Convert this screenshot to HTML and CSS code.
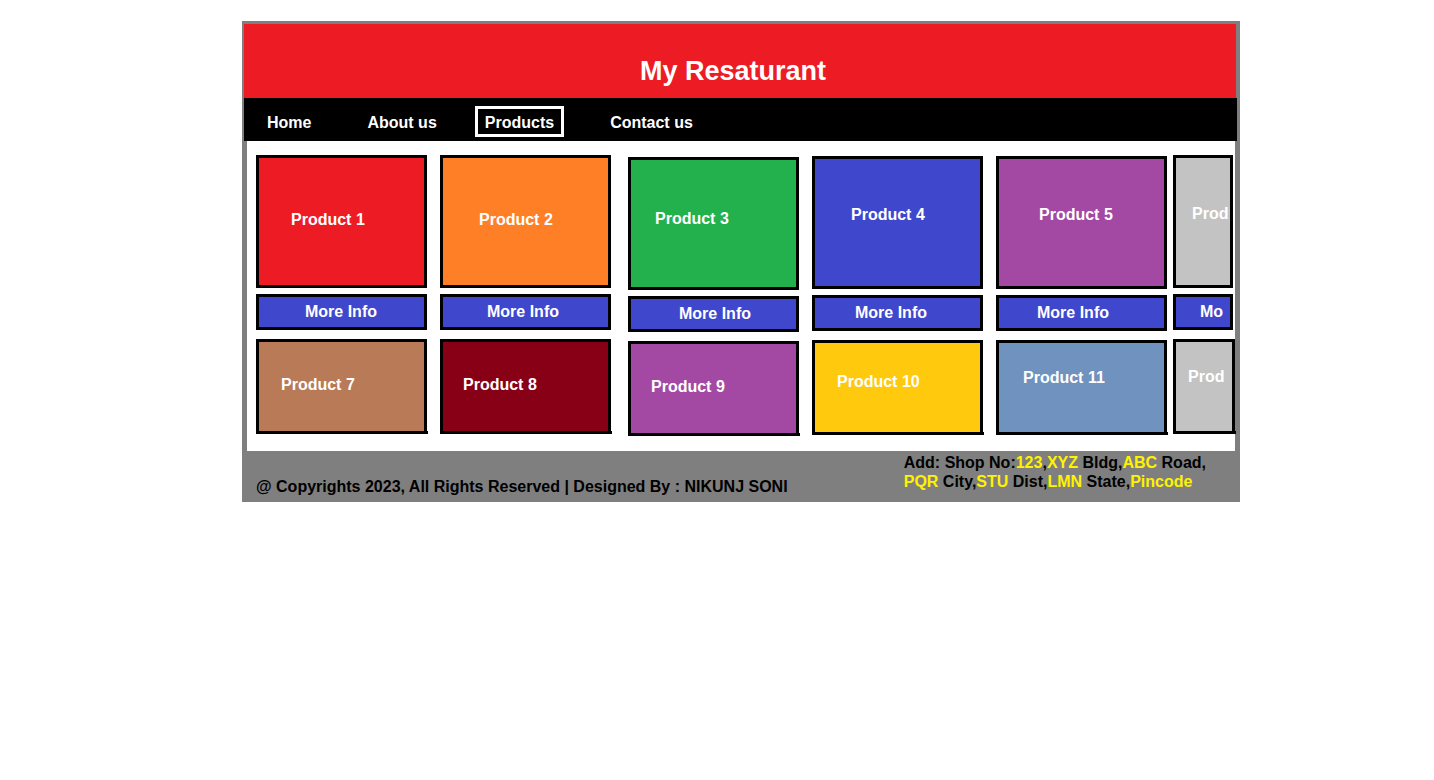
FILE: index.html
```html
<!DOCTYPE html>
<html lang="en">
<head>
<meta charset="utf-8">
<title>My Resaturant</title>
<link rel="stylesheet" href="styles.css">
</head>
<body>
<div class="page">
  <header class="banner"><h1 class="title">My Resaturant</h1></header>
  <nav class="nav">
    <a class="nav-link" href="#">Home</a>
    <a class="nav-link spaced" href="#">About us</a>
    <a class="nav-link current" href="#">Products</a>
    <a class="nav-link spaced" href="#">Contact us</a>
  </nav>
  <main class="products">
    <section class="column gap-m">
      <div class="card tall red in-32">Product 1</div>
      <button class="more in-46">More Info</button>
      <div class="card short brown in-22">Product 7</div>
    </section>
    <section class="column gap-l">
      <div class="card tall orange in-36">Product 2</div>
      <button class="more in-44">More Info</button>
      <div class="card short maroon in-20">Product 8</div>
    </section>
    <section class="column gap-m drop-2">
      <div class="card tall mid green in-24">Product 3</div>
      <button class="more in-48">More Info</button>
      <div class="card short purple in-20">Product 9</div>
    </section>
    <section class="column gap-m drop-1">
      <div class="card tall raised blue in-36">Product 4</div>
      <button class="more in-40">More Info</button>
      <div class="card short mid yellow in-22">Product 10</div>
    </section>
    <section class="column gap-s drop-1">
      <div class="card tall raised purple in-40">Product 5</div>
      <button class="more in-38">More Info</button>
      <div class="card short raised steel in-24">Product 11</div>
    </section>
    <section class="column narrow">
      <div class="card tall raised silver in-16">Prod</div>
      <button class="more in-24">Mo</button>
      <div class="card short raised silver in-12 bleed">Prod</div>
    </section>
  </main>
  <footer class="footer">
    <p class="copyright">@ Copyrights 2023, All Rights Reserved | Designed By : NIKUNJ SONI</p>
    <address class="address">Add: Shop No:<span class="mark">123</span>,<span class="mark">XYZ</span> Bldg,<span class="mark">ABC</span> Road,<br><span class="mark">PQR</span> City,<span class="mark">STU</span> Dist,<span class="mark">LMN</span> State,<span class="mark">Pincode</span></address>
  </footer>
</div>
</body>
</html>
```
FILE: styles.css
```css
* { box-sizing: border-box; }

body {
  margin: 0;
  padding: 21px 194px 0 242px;
  background: #fff;
  font: bold 16px/18px "Liberation Sans", Arial, sans-serif;
}

.page {
  background: #7f7f7f;
  padding: 3px 3px 0 2px;
}

.banner {
  margin-right: 1px;
  background: #ed1c24;
  padding: 31px 14px 11px 0;
  color: #fff;
  text-align: center;
}

.title {
  margin: 0;
  font-size: 27px;
  line-height: 32px;
}

.nav {
  display: flex;
  gap: 28px;
  background: #000;
  padding: 8px 13px 4px;
}

.nav-link {
  border: 3px solid transparent;
  padding: 5px 7px 2px;
  line-height: 18px;
  color: #fff;
  text-decoration: none;
}

.spaced { margin-left: 8px; }
.current { border-color: #fff; }

.products {
  display: flex;
  align-items: flex-start;
  margin: 0 2px 0 3px;
  padding: 14px 2px 15px 9px;
  background: #fff;
}

.column {
  display: flex;
  flex: 171 1 0;
  flex-direction: column;
  min-width: 0;
}

.narrow { flex-grow: 60; }
.gap-s { margin-right: 6px; }
.gap-m { margin-right: 13px; }
.gap-l { margin-right: 17px; }
.drop-1 { padding-top: 1px; }
.drop-2 { padding-top: 2px; }

.card {
  position: relative;
  border: 3px solid #000;
  color: #fff;
}

.tall {
  height: 133px;
  padding-top: 53px;
}

.tall.mid { padding-top: 50px; }
.tall.raised { padding-top: 47px; }

.short {
  height: 95px;
  padding-top: 34px;
}

.short.mid { padding-top: 30px; }
.short.raised { padding-top: 26px; }

/* Baseline rule that runs slightly past the card's corner */
.short::after {
  content: "";
  position: absolute;
  right: -4px;
  bottom: -3px;
  left: -3px;
  height: 3px;
  background: #000;
}

.bleed { margin-right: -2px; }

.more {
  height: 36px;
  margin: 6px 0 9px;
  border: 3px solid #000;
  padding: 0;
  background: #3f48cc;
  color: #fff;
  font: inherit;
  text-align: left;
}

.card.in-12 { padding-left: 12px; }
.card.in-16 { padding-left: 16px; }
.card.in-20 { padding-left: 20px; }
.card.in-22 { padding-left: 22px; }
.card.in-24, .more.in-24 { padding-left: 24px; }
.card.in-32 { padding-left: 32px; }
.card.in-36 { padding-left: 36px; }
.more.in-38 { padding-left: 38px; }
.card.in-40, .more.in-40 { padding-left: 40px; }
.more.in-44 { padding-left: 44px; }
.more.in-46 { padding-left: 46px; }
.more.in-48 { padding-left: 48px; }

.red { background: #ed1c24; }
.orange { background: #ff7f27; }
.green { background: #22b14c; }
.blue { background: #3f48cc; }
.purple { background: #a349a4; }
.silver { background: #c3c3c3; }
.brown { background: #b97a57; }
.maroon { background: #880015; }
.yellow { background: #ffc90e; }
.steel { background: #7092be; }

.footer {
  display: flex;
  align-items: flex-end;
  justify-content: space-between;
  padding: 2px 31px 6px 12px;
  color: #000;
}

.copyright { margin: 0; }

.address {
  padding-bottom: 5px;
  font-style: normal;
  line-height: 19px;
}

.mark { color: #fff200; }
```
